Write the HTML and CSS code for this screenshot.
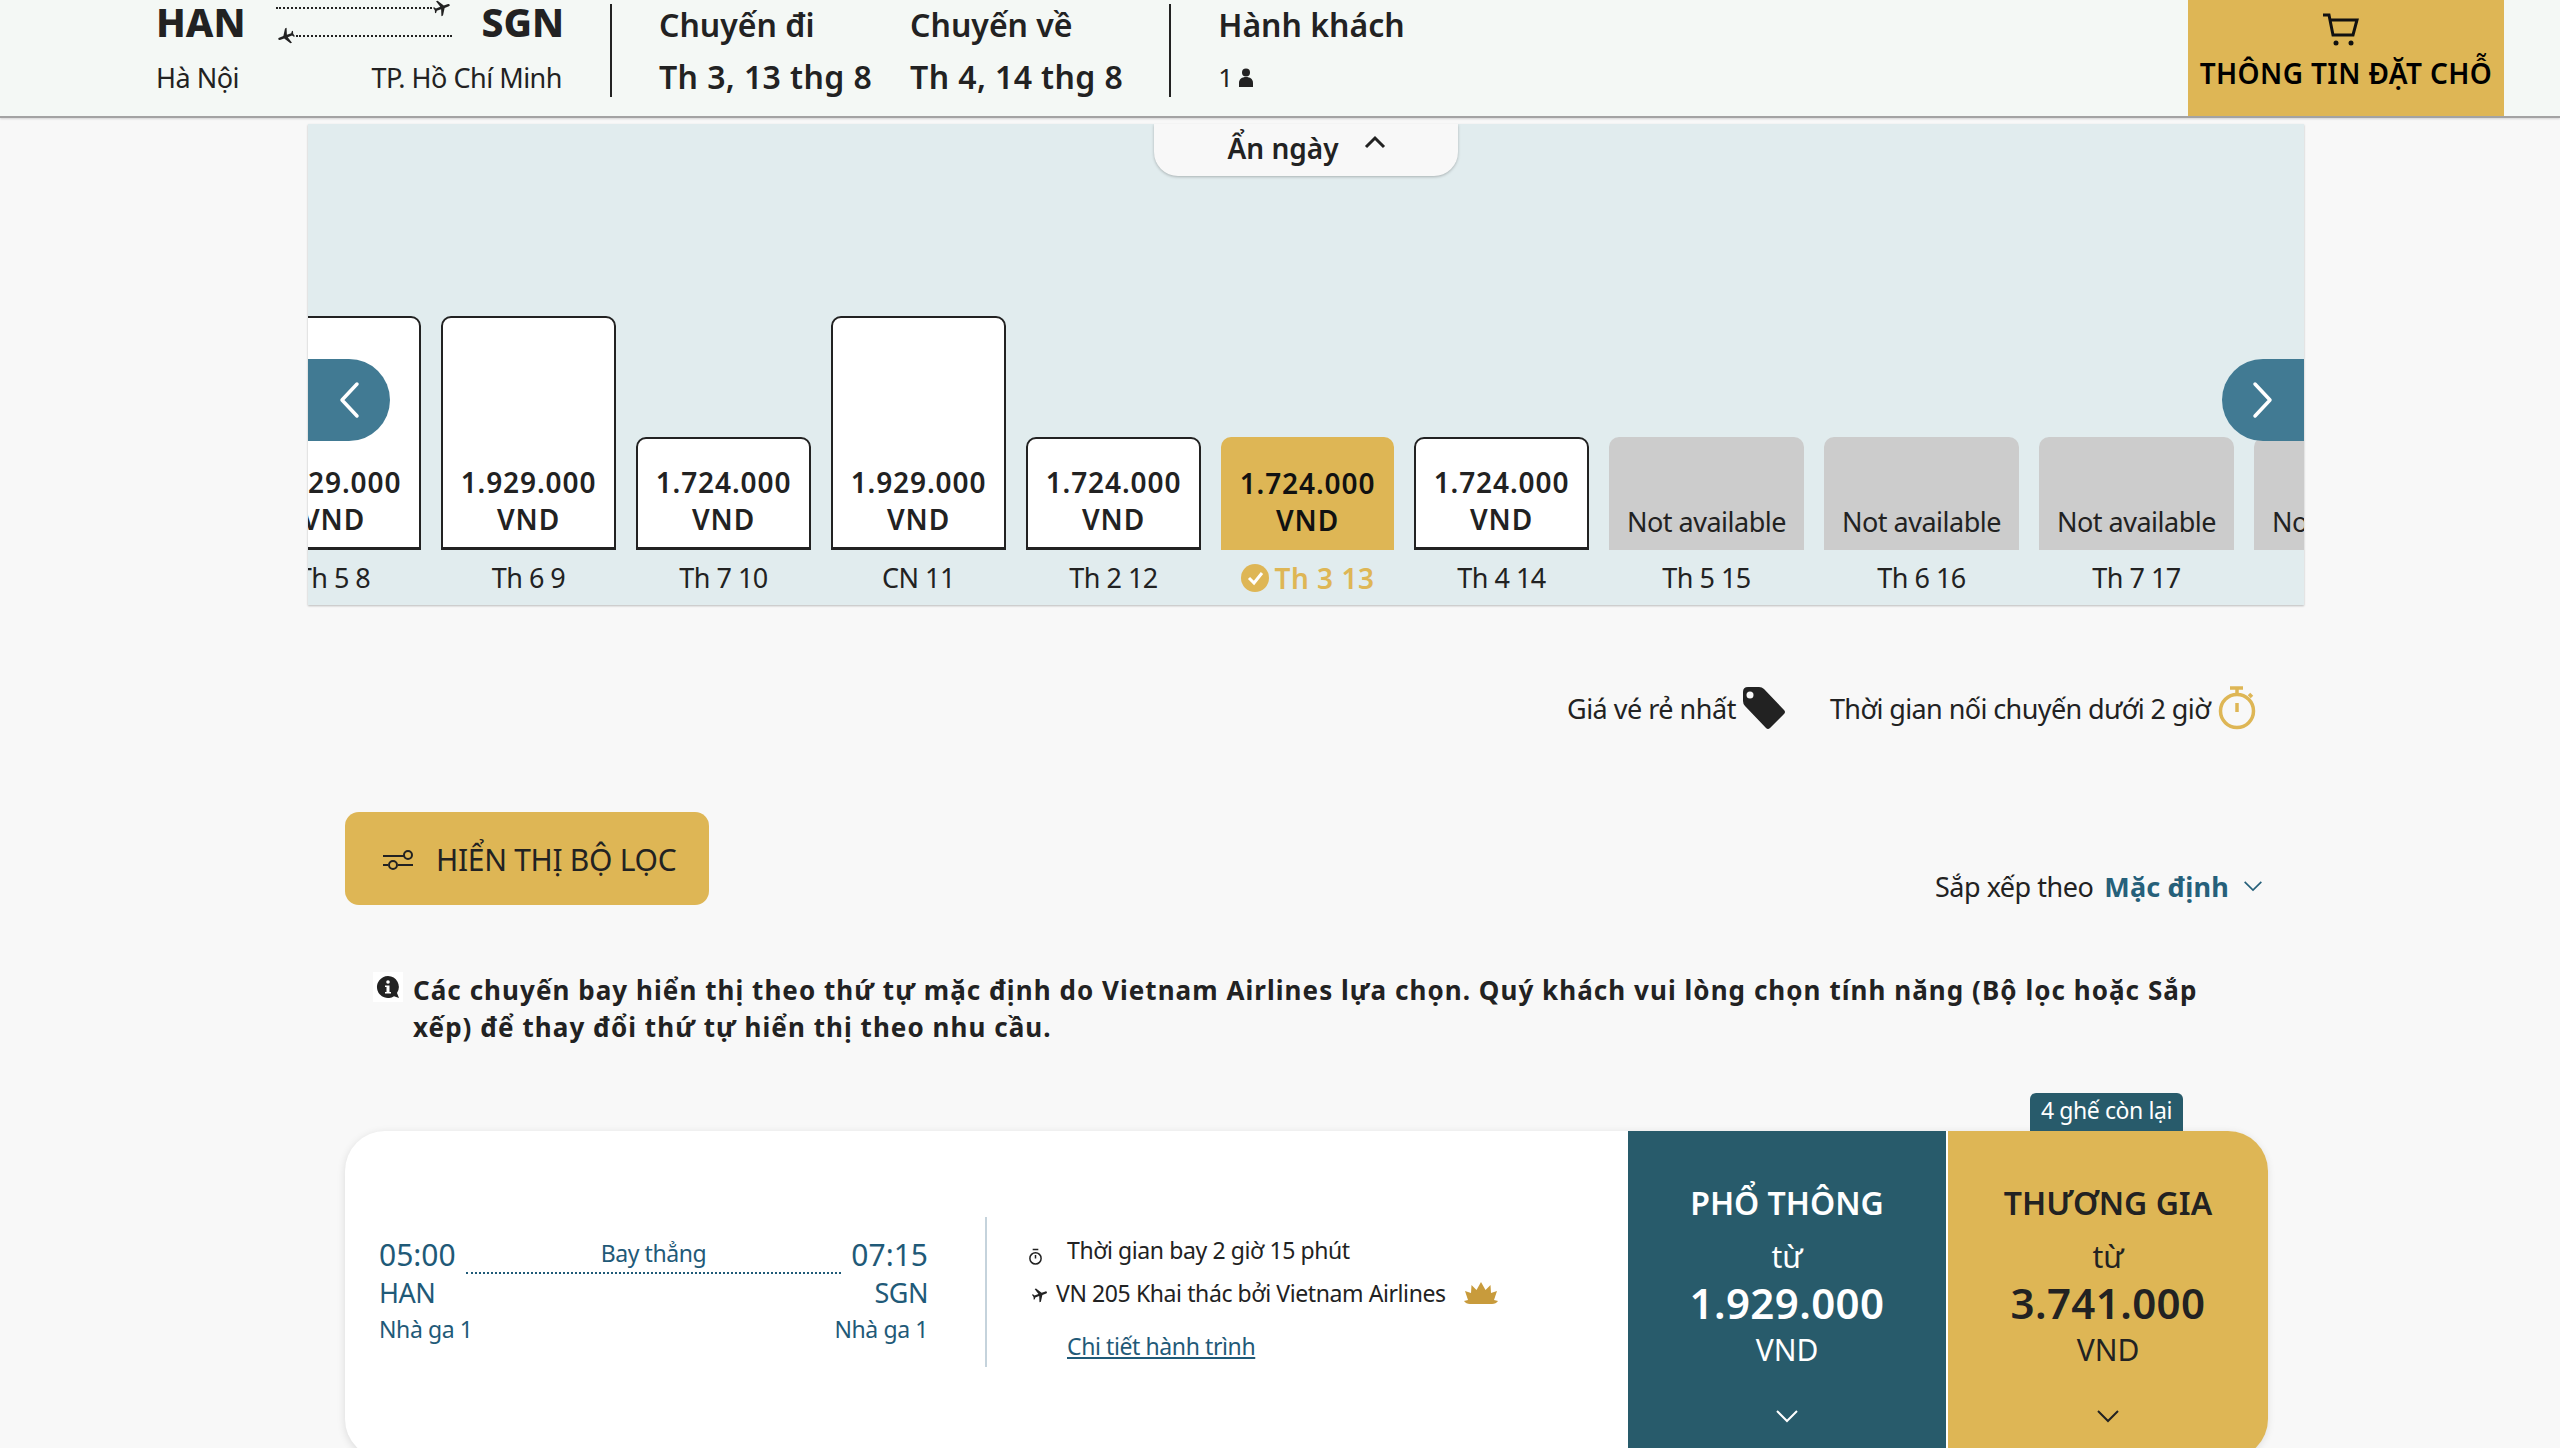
FILE: index.html
```html
<!DOCTYPE html>
<html>
<head>
    <meta charset="UTF-8">
    <title>Chọn chuyến bay</title>
    <link rel="stylesheet" href="styles.css">
</head>
<body>
    <svg class="icon-defs" width="0" height="0">
        <symbol id="plane" viewBox="0 0 24 24">
            <path d="M21 16v-2l-8-5V3.5c0-.83-.67-1.5-1.5-1.5S10 2.67 10 3.5V9l-8 5v2l8-2.5V19l-2 1.5V22l3.5-1 3.5 1v-1.5L13 19v-5.5l8 2.5z"/>
        </symbol>
        <symbol id="chev-down" viewBox="0 0 24 14">
            <path d="M2 2l10 10L22 2" fill="none" stroke="currentColor" stroke-width="2"/>
        </symbol>
    </svg>

    <header class="top-bar">
        <div class="route">
            <div class="route-codes">
                <span class="code">HAN</span>
                <div class="route-lines">
                    <div class="route-line line-out">
                        <i class="dots"></i>
                        <svg class="route-plane plane-out"><use href="#plane"/></svg>
                    </div>
                    <div class="route-line line-back">
                        <svg class="route-plane plane-back"><use href="#plane"/></svg>
                        <i class="dots"></i>
                    </div>
                </div>
                <span class="code">SGN</span>
            </div>
            <div class="route-cities">
                <span>Hà Nội</span>
                <span>TP. Hồ Chí Minh</span>
            </div>
        </div>
        <div class="trip">
            <div class="trip-col">
                <div class="trip-title">Chuyến đi</div>
                <div class="trip-value">Th 3, 13 thg 8</div>
            </div>
            <div class="trip-col">
                <div class="trip-title">Chuyến về</div>
                <div class="trip-value">Th 4, 14 thg 8</div>
            </div>
        </div>
        <div class="trip pax">
            <div class="trip-col">
                <div class="trip-title">Hành khách</div>
                <div class="pax-value">1
                    <svg class="person" viewBox="0 0 14 19"><circle cx="7" cy="4.5" r="4"/><path d="M0 19v-4c0-4 3-6 7-6s7 2 7 6v4z"/></svg>
                </div>
            </div>
        </div>
        <a class="cart-btn">
            <svg class="cart" viewBox="0 0 38 34" fill="none" stroke="#111" stroke-width="3">
                <path d="M1 2h6l4 20h20l4-15H8"/>
                <circle cx="14" cy="30" r="2.5" fill="#111" stroke="none"/>
                <circle cx="29" cy="30" r="2.5" fill="#111" stroke="none"/>
            </svg>
            <span>THÔNG TIN ĐẶT CHỖ</span>
        </a>
    </header>

    <section class="calendar">
        <button class="hide-tab">Ẩn ngày
            <svg class="tab-chev" viewBox="0 0 24 14"><path d="M3 12l9-9 9 9" fill="none" stroke="#222" stroke-width="3"/></svg>
        </button>
        <div class="days">
            <div class="day"><div class="bar tall"><span class="price">1.929.000</span><span>VND</span></div><div class="day-label">Th 5 8</div></div>
            <div class="day"><div class="bar tall"><span class="price">1.929.000</span><span>VND</span></div><div class="day-label">Th 6 9</div></div>
            <div class="day"><div class="bar"><span class="price">1.724.000</span><span>VND</span></div><div class="day-label">Th 7 10</div></div>
            <div class="day"><div class="bar tall"><span class="price">1.929.000</span><span>VND</span></div><div class="day-label">CN 11</div></div>
            <div class="day"><div class="bar"><span class="price">1.724.000</span><span>VND</span></div><div class="day-label">Th 2 12</div></div>
            <div class="day day-active"><div class="bar bar-active"><span class="price">1.724.000</span><span>VND</span></div>
                <div class="day-label">
                    <svg class="check" viewBox="0 0 28 28"><circle cx="14" cy="14" r="14" fill="#deb655"/><path d="M8 14l5 5 8-10" fill="none" stroke="#fff" stroke-width="3"/></svg>
                    Th 3 13
                </div>
            </div>
            <div class="day"><div class="bar"><span class="price">1.724.000</span><span>VND</span></div><div class="day-label">Th 4 14</div></div>
            <div class="day day-na"><div class="bar bar-na"><span>Not available</span></div><div class="day-label">Th 5 15</div></div>
            <div class="day day-na"><div class="bar bar-na"><span>Not available</span></div><div class="day-label">Th 6 16</div></div>
            <div class="day day-na"><div class="bar bar-na"><span>Not available</span></div><div class="day-label">Th 7 17</div></div>
            <div class="day day-na"><div class="bar bar-na"><span>Not available</span></div><div class="day-label">CN 18</div></div>
        </div>
        <button class="scroll-btn scroll-left">
            <svg viewBox="0 0 22 38"><path d="M19 3L4 19l15 16" fill="none" stroke="#fff" stroke-width="3.5" stroke-linecap="round" stroke-linejoin="round"/></svg>
        </button>
        <button class="scroll-btn scroll-right">
            <svg viewBox="0 0 22 38"><path d="M3 3l15 16L3 35" fill="none" stroke="#fff" stroke-width="3.5" stroke-linecap="round" stroke-linejoin="round"/></svg>
        </button>
    </section>

    <div class="legend">
        <span>Giá vé rẻ nhất</span>
        <svg class="tag" viewBox="0 0 44 44"><path d="M1 6q0-5 5-5h11q3 0 5 2l20 21q2 2 0 4L28 42q-2 2-4 0L3 20q-2-2-2-5z" fill="#222"/><circle cx="8" cy="9" r="3.5" fill="#f8f8f8"/></svg>
        <span class="legend-second">Thời gian nối chuyến dưới 2 giờ</span>
        <svg class="timer" viewBox="0 0 38 44" fill="none" stroke="#deb655" stroke-width="3.5">
            <circle cx="19" cy="25" r="16.5"/>
            <path d="M12 2h13M19 2v6M31 8l3 3M19 17v9"/>
        </svg>
    </div>

    <main class="content">
        <div class="filter-row">
            <button class="filter-btn">
                <svg class="sliders" viewBox="0 0 30 20" fill="none" stroke="#222" stroke-width="2">
                    <path d="M0 6h21"/><circle cx="25" cy="5" r="4"/><path d="M0 15h5M15 15h15"/><circle cx="10" cy="15" r="4"/>
                </svg>
                HIỂN THỊ BỘ LỌC
            </button>
            <div class="sort">
                <span>Sắp xếp theo</span>
                <b>Mặc định</b>
                <svg class="sort-chev"><use href="#chev-down"/></svg>
            </div>
        </div>

        <div class="notice">
            <div class="notice-icon">
                <svg viewBox="0 0 24 24"><path d="M12 1a11 11 0 1 0 6 20.200l5 1.800-2-5A11 11 0 0 0 12 1z" fill="#222"/><circle cx="12" cy="7" r="1.800" fill="#fff"/><path d="M9 10.500h4.500V17H15v1.500H9V17h1.500v-5H9z" fill="#fff"/></svg>
            </div>
            <p>Các chuyến bay hiển thị theo thứ tự mặc định do Vietnam Airlines lựa chọn. Quý khách vui lòng chọn tính năng (Bộ lọc hoặc Sắp xếp) để thay đổi thứ tự hiển thị theo nhu cầu.</p>
        </div>

        <article class="flight">
            <div class="flight-main">
                <div class="times">
                    <div class="time-row">
                        <span class="time">05:00</span>
                        <div class="stops"><span>Bay thẳng</span></div>
                        <span class="time">07:15</span>
                    </div>
                    <div class="place-row"><span>HAN</span><span>SGN</span></div>
                    <div class="terminal-row"><span>Nhà ga 1</span><span>Nhà ga 1</span></div>
                </div>
                <div class="details">
                    <div class="detail-row duration">
                        <svg class="mini-clock" viewBox="0 0 16 18" fill="none" stroke="#222" stroke-width="1.600">
                            <circle cx="8" cy="11" r="6"/><path d="M5 1.500h6M8 7.500V11"/>
                        </svg>
                        <span>Thời gian bay 2 giờ 15 phút</span>
                    </div>
                    <div class="detail-row operator">
                        <svg class="mini-plane"><use href="#plane"/></svg>
                        <span>VN 205 Khai thác bởi Vietnam Airlines</span>
                        <svg class="lotus" viewBox="0 0 34 22"><path d="M17 0l4.500 8 5-5 .5 8 6-2-3 9 4 1q-2 3-6 3H6q-4 0-6-3l4-1-3-9 6 2 .5-8 5 5z" fill="#c89b3c"/></svg>
                    </div>
                    <a class="detail-link">Chi tiết hành trình</a>
                </div>
            </div>
            <div class="fare fare-eco">
                <div class="fare-name">PHỔ THÔNG</div>
                <div class="fare-from">từ</div>
                <div class="fare-price">1.929.000</div>
                <div class="fare-cur">VND</div>
                <svg class="fare-chev"><use href="#chev-down"/></svg>
            </div>
            <div class="fare fare-biz">
                <div class="seats-left">4 ghế còn lại</div>
                <div class="fare-name">THƯƠNG GIA</div>
                <div class="fare-from">từ</div>
                <div class="fare-price">3.741.000</div>
                <div class="fare-cur">VND</div>
                <svg class="fare-chev"><use href="#chev-down"/></svg>
            </div>
        </article>
    </main>
</body>
</html>
```

FILE: styles.css
```css
html, body {
    height: 1448px;
    overflow: hidden;
}

body {
    margin: 0;
    background: #f8f8f8;
    color: #222;
    font-family: "Noto Sans", "Open Sans", sans-serif;
    font-size: 26px;
}

.icon-defs {
    position: absolute;
}

/* top bar */
.top-bar {
    display: flex;
    height: 116px;
    padding-left: 156px;
    background: #f4f8f5;
    border-bottom: 2px solid #a3a3a3;
    box-shadow: 0 1px 2px rgba(0,0,0,0.15);
}

.route {
    width: 406px;
    margin-right: 48px;
}

.route-codes {
    display: flex;
    justify-content: space-between;
    height: 44px;
}

.code {
    font-size: 39px;
    font-weight: 800;
    line-height: 44px;
}

.route-lines {
    width: 176px;
    margin-right: 30px;
    margin-left: 30px;
    flex: none;
}

.route-line {
    display: flex;
    align-items: center;
    height: 16px;
}

.line-back {
    margin-top: 12px;
}

.dots {
    flex: 1;
    border-top: 2px dotted #222;
}

.route-plane {
    width: 20px;
    height: 20px;
    flex: none;
    fill: #222;
}

.plane-out {
    transform: rotate(70deg);
}

.plane-back {
    transform: rotate(-110deg);
}

.route-cities {
    display: flex;
    justify-content: space-between;
    margin-top: 14px;
    font-size: 27px;
    line-height: 40px;
    letter-spacing: -0.5px;
}

.trip {
    display: flex;
    gap: 38px;
    height: 93px;
    margin-top: 4px;
    padding-left: 47px;
    border-left: 2px solid #222;
}

.trip-title {
    font-size: 32px;
    font-weight: 600;
    line-height: 42px;
}

.trip-value {
    margin-top: 10px;
    font-size: 32px;
    font-weight: 600;
    line-height: 42px;
    letter-spacing: 0.4px;
}

.pax {
    margin-left: 46px;
}

.pax-value {
    display: flex;
    align-items: center;
    gap: 6px;
    margin-top: 10px;
    font-size: 26px;
    line-height: 42px;
}

.person {
    width: 14px;
    height: 19px;
    fill: #222;
}

.cart-btn {
    display: flex;
    flex-direction: column;
    align-items: center;
    width: 316px;
    margin-left: auto;
    margin-right: 56px;
    padding-top: 13px;
    box-sizing: border-box;
    background: #deb655;
    color: #000;
    font-size: 28px;
    font-weight: 600;
    white-space: nowrap;
}

.cart {
    width: 38px;
    height: 34px;
    margin-right: 10px;
}

.cart-btn span {
    margin-top: 7px;
    line-height: 38px;
    letter-spacing: 0.4px;
}

/* date strip */
.calendar {
    position: relative;
    display: flex;
    flex-direction: column;
    justify-content: space-between;
    width: 1996px;
    height: 481px;
    margin: 6px 0 0 308px;
    overflow: hidden;
    background: #e1ecee;
    box-shadow: 0 1px 2px rgba(0,0,0,0.25);
}

.hide-tab {
    display: flex;
    align-items: center;
    justify-content: center;
    gap: 24px;
    width: 304px;
    height: 52px;
    margin: 0 auto;
    padding: 0 0 5px 2px;
    border: none;
    border-radius: 0 0 24px 24px;
    background: #f8f8f8;
    box-shadow: 0 1px 3px rgba(0,0,0,0.25);
    color: #222;
    font: 600 28px "Noto Sans", sans-serif;
}

.tab-chev {
    width: 24px;
    height: 14px;
    margin-bottom: 12px;
}

.days {
    display: flex;
    align-items: flex-end;
    gap: 20px;
    margin-left: -62px;
}

.day {
    width: 175px;
    flex: none;
    text-align: center;
}

.day-active {
    width: 173px;
}

.day-na {
    width: 195px;
}

.bar {
    display: flex;
    flex-direction: column;
    justify-content: flex-end;
    box-sizing: border-box;
    height: 113px;
    padding-bottom: 9px;
    background: #fff;
    border: 2px solid #222;
    border-bottom-width: 3px;
    border-radius: 10px 10px 0 0;
    font-size: 28px;
    font-weight: 600;
    line-height: 37px;
    letter-spacing: 0.9px;
}

.tall {
    height: 234px;
}

.bar-active {
    height: 113px;
    padding-bottom: 11px;
    background: #deb655;
    border: none;
    color: #111;
}

.bar-na {
    height: 113px;
    padding-bottom: 10px;
    background: #ccc;
    border: none;
    font-size: 27px;
    font-weight: 400;
    letter-spacing: -0.5px;
}

.day-label {
    display: flex;
    align-items: center;
    justify-content: center;
    gap: 6px;
    height: 55px;
    font-size: 27px;
    letter-spacing: -0.5px;
    white-space: nowrap;
}

.day-active .day-label {
    color: #deb655;
    font-size: 28px;
    font-weight: 600;
    letter-spacing: 0.5px;
}

.check {
    width: 28px;
    height: 28px;
}

.scroll-btn {
    position: absolute;
    top: 235px;
    display: flex;
    align-items: center;
    width: 122px;
    height: 82px;
    padding: 0;
    border: none;
    border-radius: 41px;
    background: #417a93;
}

.scroll-btn svg {
    width: 22px;
    height: 38px;
}

.scroll-left {
    left: -40px;
    justify-content: flex-end;
    padding-right: 30px;
}

.scroll-right {
    right: -40px;
    justify-content: flex-start;
    padding-left: 30px;
}

/* legend */
.legend {
    display: flex;
    align-items: center;
    height: 44px;
    margin: 81px 0 0 1567px;
    font-size: 27px;
    letter-spacing: -0.5px;
}

.tag {
    width: 44px;
    height: 44px;
    margin-left: 6px;
}

.legend-second {
    margin-left: 44px;
    letter-spacing: -0.6px;
}

.timer {
    width: 38px;
    height: 44px;
    margin-left: 8px;
}

/* results */
.content {
    width: 1922px;
    margin: 0 0 0 345px;
}

.filter-row {
    display: flex;
    justify-content: space-between;
    margin-top: 82px;
}

.filter-btn {
    display: flex;
    align-items: center;
    gap: 23px;
    width: 364px;
    height: 93px;
    padding: 2px 0 0 38px;
    border: none;
    border-radius: 14px;
    background: #deb655;
    color: #222;
    font: 400 30px "Noto Sans", sans-serif;
    letter-spacing: -0.3px;
}

.sliders {
    width: 30px;
    height: 20px;
}

.sort {
    display: flex;
    align-items: center;
    height: 40px;
    margin-top: 54px;
    margin-right: 4px;
}

.sort span {
    font-size: 27px;
    letter-spacing: -0.5px;
}

.sort b {
    margin-left: 11px;
    color: #26607a;
    font-size: 27px;
    font-weight: 700;
    letter-spacing: 0.2px;
}

.sort-chev {
    width: 20px;
    height: 12px;
    margin-left: 14px;
    color: #26607a;
}

.notice {
    display: flex;
    align-items: flex-start;
    margin: 66px 0 0 28px;
}

.notice-icon {
    width: 30px;
    height: 30px;
    padding: 3px;
    box-sizing: border-box;
    flex: none;
    background: #fff;
}

.notice-icon svg {
    display: block;
}

.notice p {
    width: 1800px;
    margin: 0 0 0 10px;
    font-size: 26px;
    font-weight: 700;
    line-height: 37px;
    letter-spacing: 1.05px;
}

/* flight card */
.flight {
    position: relative;
    display: flex;
    height: 328px;
    margin-top: 85px;
    background: #fff;
    border-radius: 40px;
    box-shadow: 0 2px 8px rgba(0,0,0,0.12);
}

.flight-main {
    display: flex;
    width: 1283px;
    flex: none;
    padding-top: 86px;
    box-sizing: border-box;
    height: 236px;
}

.times {
    width: 549px;
    margin-left: 34px;
    color: #1f5a78;
}

.time-row {
    display: flex;
    align-items: flex-start;
    height: 44px;
    margin-top: 16px;
    font-size: 30px;
    line-height: 44px;
}

.stops {
    flex: 1;
    height: 39px;
    margin: 0 10px;
    border-bottom: 2px dotted #1f5a78;
    font-size: 23px;
    line-height: 40px;
    letter-spacing: -0.4px;
    text-align: center;
}

.place-row, .terminal-row {
    display: flex;
    justify-content: space-between;
}

.place-row {
    margin-top: -2px;
    font-size: 27px;
    line-height: 36px;
    letter-spacing: -0.5px;
}

.terminal-row {
    font-size: 23px;
    line-height: 36px;
    letter-spacing: -0.4px;
}

.details {
    position: relative;
    height: 150px;
    margin-left: 57px;
    padding-left: 47px;
    border-left: 2px solid #c5d3dc;
    font-size: 23px;
    letter-spacing: -0.4px;
}

.detail-row {
    display: flex;
    align-items: center;
    white-space: nowrap;
}

.duration {
    height: 36px;
    margin-top: 15px;
    margin-left: 33px;
}

.operator {
    height: 36px;
    margin-top: 7px;
    margin-left: -3px;
}

.mini-clock {
    position: absolute;
    left: 41px;
    top: 31px;
    width: 15px;
    height: 17px;
}

.mini-plane {
    width: 18px;
    height: 18px;
    margin: 4px 7px 0 0;
    fill: #222;
    transform: rotate(70deg);
}

.lotus {
    width: 34px;
    height: 22px;
    margin-left: 18px;
}

.detail-link {
    display: block;
    margin: 18px 0 0 33px;
    color: #1f5a78;
    line-height: 34px;
    text-decoration: underline;
}

.fare {
    position: relative;
    width: 318px;
    flex: none;
    box-sizing: border-box;
    padding-top: 50px;
    text-align: center;
}

.fare-eco {
    background: #285b6b;
    color: #fff;
}

.fare-biz {
    width: 320px;
    margin-left: 2px;
    background: #deb655;
    border-radius: 0 40px 40px 0;
}

.seats-left {
    position: absolute;
    top: -38px;
    left: 82px;
    width: 153px;
    height: 38px;
    background: #285b6b;
    border-radius: 6px 6px 0 0;
    color: #fff;
    font-size: 23px;
    line-height: 34px;
    letter-spacing: -0.4px;
}

.fare-name {
    font-size: 32px;
    font-weight: 600;
    line-height: 44px;
}

.fare-from {
    margin-top: 10px;
    font-size: 30px;
    line-height: 44px;
}

.fare-price {
    margin-top: -1px;
    font-size: 42px;
    font-weight: 600;
    line-height: 50px;
    letter-spacing: 0.4px;
}

.fare-cur {
    font-size: 30px;
    line-height: 44px;
}

.fare-chev {
    display: block;
    width: 24px;
    height: 14px;
    margin: 37px auto 0;
}
```
